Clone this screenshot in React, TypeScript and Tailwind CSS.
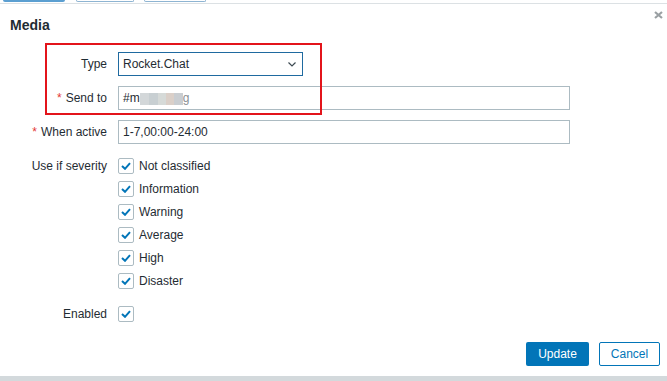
import React from "react";

const severities = ["Not classified", "Information", "Warning", "Average", "High", "Disaster"];

function Check() {
  return (
    <div className="w-4 h-4 border border-[#acbbc2] rounded-[2px] bg-white flex items-center justify-center shrink-0">
      <svg width="10" height="8" viewBox="0 0 10 8">
        <polyline points="1,4 4,6.8 9,1.2" fill="none" stroke="#0275b8" strokeWidth="2" />
      </svg>
    </div>
  );
}

function Label({ text, required }: { text: string; required?: boolean }) {
  return (
    <div className="w-[107px] shrink-0 text-right">
      {required && <span className="text-[#e33734] mr-[4px]">*</span>}
      {text}
    </div>
  );
}

export default function App() {
  return (
    <div
      className="w-[667px] h-[381px] flex flex-col bg-[#d3d9dc] text-[12px] text-[#1f2c33] overflow-hidden"
      style={{ fontFamily: '"Liberation Sans", Arial, sans-serif' }}
    >
      {/* tabs peeking out above */}
      <div className="h-[3px] bg-white flex items-start shrink-0">
        <div className="ml-[3px] w-[62px] h-[2px] bg-[#5b9fd1] rounded-b-[2px]" />
        <div className="ml-[11px] w-[58px] h-[2px] border-x border-b border-[#8eb4d2] rounded-b-[2px]" />
        <div className="ml-[10px] w-[62px] h-[2px] border-x border-b border-[#8eb4d2] rounded-b-[2px]" />
      </div>

      <div className="relative h-[373px] bg-white border-t border-[#dce1e4] shrink-0">
        <div className="pt-[13px] pl-[10px] text-[14px] leading-4 font-bold">Media</div>

        <button className="absolute right-[4px] top-[7px]">
          <svg width="9" height="8" viewBox="0 0 9 8">
            <path d="M1 1 L8 7 M8 1 L1 7" stroke="#9aa0a3" strokeWidth="2.2" />
          </svg>
        </button>

        <div className="mt-[19px] flex flex-col">
          <div className="flex items-center h-6">
            <Label text="Type" />
            <div className="ml-[11px] w-[185px] h-6 border border-[#1f6aa0] flex items-center justify-between pl-[4px] pr-[6px]">
              <span>Rocket.Chat</span>
              <svg width="8" height="5" viewBox="0 0 8 5">
                <polyline points="0.5,0.5 4,4 7.5,0.5" fill="none" stroke="#3d4a52" strokeWidth="1.2" />
              </svg>
            </div>
          </div>

          <div className="flex items-center h-6 mt-[10px]">
            <Label text="Send to" required />
            <div className="ml-[11px] w-[452px] h-6 border border-[#acbbc2] flex items-center pl-[4px]">
              <span>#m</span>
              <div className="flex h-[12px] mt-[2px] blur-[0.6px]">
                <div className="w-[9px] bg-[#d3d7d9]" />
                <div className="w-[9px] bg-[#c8cfd2]" />
                <div className="w-[8px] bg-[#d6dad8]" />
                <div className="w-[8px] bg-[#dacfc8]" />
                <div className="w-[9px] bg-[#c9cdd1]" />
              </div>
              <span className="text-[#8a9094]">g</span>
            </div>
          </div>

          <div className="flex items-center h-6 mt-[10px]">
            <Label text="When active" required />
            <div className="ml-[11px] w-[452px] h-6 border border-[#acbbc2] flex items-center pl-[4px]">
              1-7,00:00-24:00
            </div>
          </div>

          <div className="flex items-start mt-[14px]">
            <div className="leading-4">
              <Label text="Use if severity" />
            </div>
            <div className="ml-[11px] flex flex-col gap-[7px]">
              {severities.map((s) => (
                <div key={s} className="flex items-center h-4 gap-[5px]">
                  <Check />
                  <span>{s}</span>
                </div>
              ))}
            </div>
          </div>

          <div className="flex items-center h-4 mt-[17px]">
            <Label text="Enabled" />
            <div className="ml-[11px]">
              <Check />
            </div>
          </div>
        </div>

        <div className="mt-[20px] flex justify-end gap-[10px] pr-[7px]">
          <button className="w-[63px] h-6 bg-[#0275b8] text-white rounded-[2px]">Update</button>
          <button className="w-[61px] h-6 bg-white border border-[#0275b8] text-[#0275b8] rounded-[2px]">Cancel</button>
        </div>

        {/* red highlight annotation */}
        <div className="absolute left-[45px] top-[39px] w-[277px] h-[72px] border-2 border-[#e3141b]" />
      </div>
    </div>
  );
}
